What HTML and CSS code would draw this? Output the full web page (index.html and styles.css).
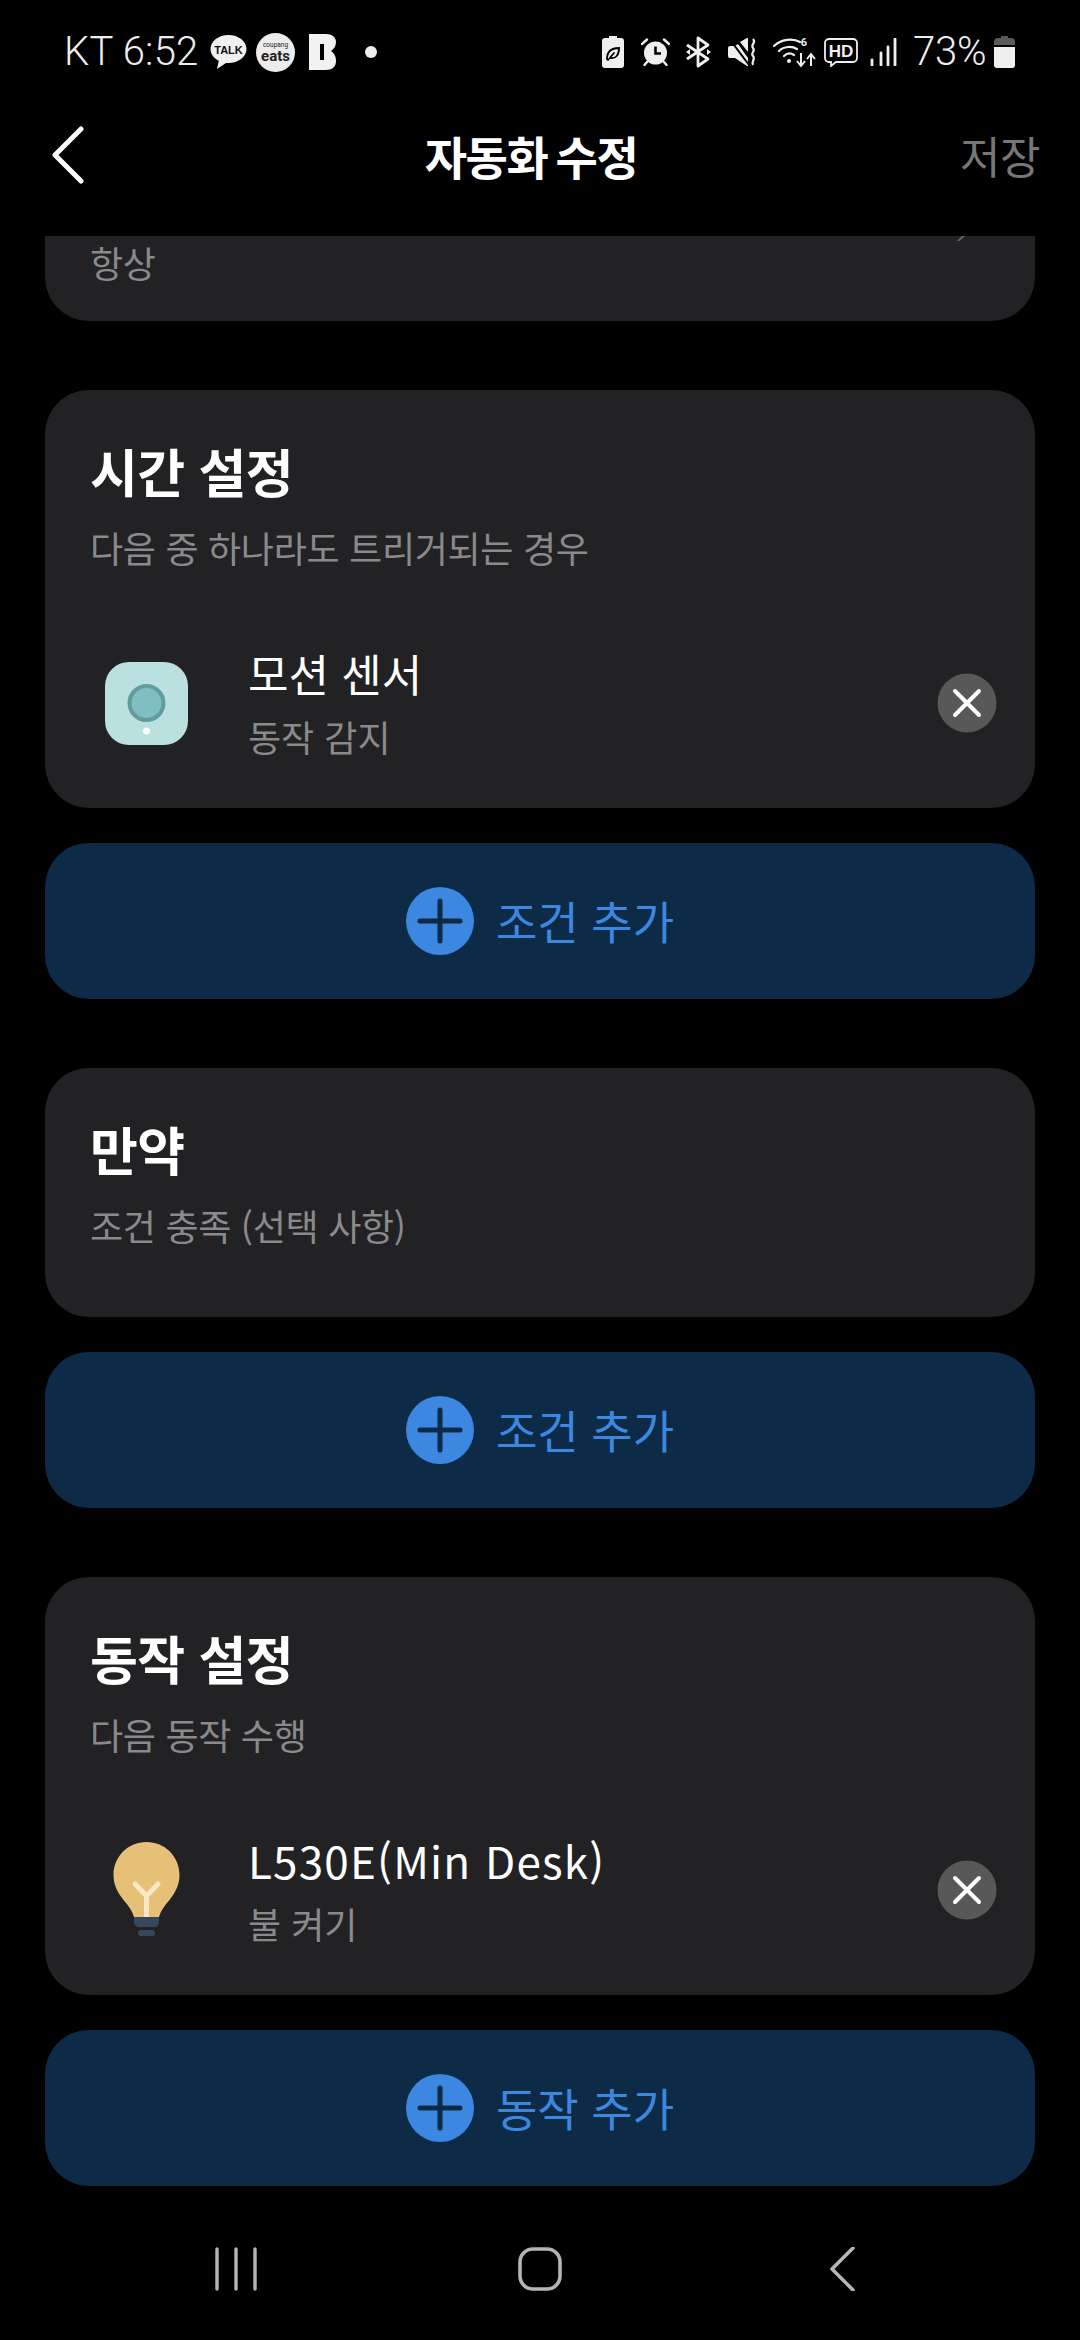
FILE: index.html
```html
<!DOCTYPE html>
<html lang="ko">
<head>
<meta charset="utf-8">
<title>자동화 수정</title>
<link rel="stylesheet" href="styles.css">
</head>
<body>
<div class="app">
  <div class="status">
    <span class="clock">KT 6:52</span>
    <svg class="si s-talk" viewBox="0 0 37 36"><path d="M18.500 1C8.500 1 .5 7.300.5 15c0 5 3.300 9.300 8.300 11.700L7 35l9-6.100c.8.100 1.700.1 2.500.1 10 0 18-6.300 18-14S28.500 1 18.500 1z" fill="#f0f0f0"/><text x="18.500" y="20" text-anchor="middle" class="talk-t">TALK</text></svg>
    <svg class="si s-eats" viewBox="0 0 39 39"><circle cx="19.500" cy="19.500" r="19.500" fill="#ececec"/><text x="19.500" y="14" text-anchor="middle" class="eats-s">coupang</text><text x="19.500" y="28" text-anchor="middle" class="eats-t">eats</text></svg>
    <svg class="si s-b" viewBox="0 0 27 36"><path d="M0 0h17c6 0 10 3 10 8 0 4-2 7-5 9 3 2 5 5 5 10 0 6-4 9-10 9H0z" fill="#f2f2f2"/><rect x="11" y="10" width="4" height="16" fill="#000"/></svg>
    <span class="dot"></span>
    <span class="status-space"></span>
    <svg class="si s-leaf" viewBox="0 0 22 32"><path d="M7 0h8v2h4a3 3 0 0 1 3 3v24a3 3 0 0 1-3 3H3a3 3 0 0 1-3-3V5a3 3 0 0 1 3-3h4z" fill="#efefef"/><path d="M5 23c0-7 4-11 12-11 0 7-3 11-9 10M6 24l6-7" fill="none" stroke="#000" stroke-width="1.800" stroke-linecap="round"/></svg>
    <svg class="si s-alarm" viewBox="0 0 29 28"><circle cx="14.500" cy="15" r="11.500" fill="#efefef"/><path d="M14.500 8.500V15.500H20" fill="none" stroke="#000" stroke-width="2.600"/><path d="M1 6l5-4.500M28 6l-5-4.500M6 24l-2.500 3M23 24l2.500 3" stroke="#efefef" stroke-width="2.400" stroke-linecap="round"/></svg>
    <svg class="si s-bt" viewBox="0 0 27 32"><path d="M2 9l21 14-10 7V2l10 7L2 23" fill="none" stroke="#efefef" stroke-width="2.800" stroke-linejoin="round"/><path d="M1 16l4-3v6zM26 16l-4-3v6z" fill="#efefef"/></svg>
    <svg class="si s-mute" viewBox="0 0 30 28"><path d="M2 8h5l3-2 10 14v8l-1 0L7 20H2a2 2 0 0 1-2-2v-8a2 2 0 0 1 2-2zM12 4l7-4h1v14z" fill="#efefef"/><path d="M3 3l18 24" stroke="#000" stroke-width="2"/><path d="M25 1c4 4-3 5 0 9 3 3-3 5 0 8 3 3-2 5 0 9" fill="none" stroke="#efefef" stroke-width="2.200"/></svg>
    <svg class="si s-wifi" viewBox="0 0 43 32"><path d="M1 10C8 3 20 2 27 6M6 15c5-5 13-5 18-2M11 20c3-3 7-3 10-1" fill="none" stroke="#efefef" stroke-width="2.200" stroke-linecap="round"/><circle cx="16" cy="25" r="2" fill="#efefef"/><text x="31" y="10" text-anchor="middle" class="wifi-t">6</text><path d="M28 17v12M24 25l4 5 4-5M38 30V19M34 23l4-5 4 5" fill="none" stroke="#efefef" stroke-width="2"/></svg>
    <svg class="si s-hd" viewBox="0 0 34 29"><path d="M5 1h24a4 4 0 0 1 4 4v15a4 4 0 0 1-4 4H12l-5 4v-4H5a4 4 0 0 1-4-4V5a4 4 0 0 1 4-4z" fill="none" stroke="#efefef" stroke-width="1.800"/><text x="17" y="18.500" text-anchor="middle" class="hd-t">HD</text></svg>
    <svg class="si s-signal" viewBox="0 0 27 28"><path d="M2 22v5M11 15v12M18 9v18M25 1v26" stroke="#efefef" stroke-width="2.800" stroke-linecap="round"/></svg>
    <span class="pct">73%</span>
    <svg class="si s-batt" viewBox="0 0 21 32"><path d="M7 0h7v2h3a4 4 0 0 1 4 4v3H0V6a4 4 0 0 1 4-4h3z" fill="#5a5a5a"/><path d="M0 11h21v18a3 3 0 0 1-3 3H3a3 3 0 0 1-3-3z" fill="#efefef"/></svg>
  </div>

  <header class="topbar">
    <svg class="back" viewBox="0 0 32 58"><path d="M29 3L3 29l26 26" fill="none" stroke="#fff" stroke-width="5" stroke-linecap="round" stroke-linejoin="round"/></svg>
    <h1 class="title">자동화 수정</h1>
    <span class="save">저장</span>
  </header>

  <main class="scroll">
    <section class="card card--clipped">
      <svg class="peek" viewBox="0 0 10 6"><path d="M0 6L6 0h4L3 6z" fill="#666"/></svg>
      <p class="sub">항상</p>
    </section>

    <section class="group">
      <div class="card card--row">
        <div class="head">
          <h2 class="h">시간 설정</h2>
          <p class="sub">다음 중 하나라도 트리거되는 경우</p>
        </div>
        <div class="row">
          <svg class="device" viewBox="0 0 83 83"><rect width="83" height="83" rx="24" fill="#bae0df"/><circle cx="41.500" cy="41" r="17" fill="#7fbfc1" stroke="#629c9d" stroke-width="4"/><circle cx="41.500" cy="69" r="3.500" fill="#fff"/></svg>
          <div class="row-text">
            <div class="name">모션 센서</div>
            <div class="desc">동작 감지</div>
          </div>
          <svg class="remove" viewBox="0 0 60 60"><circle cx="30" cy="30" r="29.500" fill="#585858"/><path d="M18 18l24 24M42 18L18 42" stroke="#fff" stroke-width="4" stroke-linecap="round"/></svg>
        </div>
      </div>
      <button class="add">
        <svg class="plus" viewBox="0 0 68 68"><circle cx="34" cy="34" r="34" fill="#3c87e0"/><path d="M14 34h40M34 14v40" stroke="#0d2a47" stroke-width="5" stroke-linecap="round"/></svg>
        <span>조건 추가</span>
      </button>
    </section>

    <section class="group">
      <div class="card card--empty">
        <div class="head">
          <h2 class="h">만약</h2>
          <p class="sub">조건 충족 (선택 사항)</p>
        </div>
      </div>
      <button class="add">
        <svg class="plus" viewBox="0 0 68 68"><circle cx="34" cy="34" r="34" fill="#3c87e0"/><path d="M14 34h40M34 14v40" stroke="#0d2a47" stroke-width="5" stroke-linecap="round"/></svg>
        <span>조건 추가</span>
      </button>
    </section>

    <section class="group">
      <div class="card card--row">
        <div class="head">
          <h2 class="h">동작 설정</h2>
          <p class="sub">다음 동작 수행</p>
        </div>
        <div class="row">
          <svg class="device device--bulb" viewBox="0 0 83 96"><path d="M41.500 0C23 0 8.500 14.500 8.500 33c0 10 4 17 10 25 5 6 9 11 10.500 17h25c1.500-6 5.500-11 10.500-17 6-8 10-15 10-25C74.500 14.500 60 0 41.500 0z" fill="#e7c077"/><path d="M30 42l11.500 12L53 42M41.500 54v21" fill="none" stroke="#f8e8c6" stroke-width="5" stroke-linecap="round"/><path d="M29 75h25v4c0 4-2 6-6 6H35c-4 0-6-2-6-6z" fill="#36475e"/><rect x="33" y="88" width="17" height="6" rx="3" fill="#36475e"/></svg>
          <div class="row-text">
            <div class="name name--latin">L530E(Min Desk)</div>
            <div class="desc">불 켜기</div>
          </div>
          <svg class="remove" viewBox="0 0 60 60"><circle cx="30" cy="30" r="29.500" fill="#585858"/><path d="M18 18l24 24M42 18L18 42" stroke="#fff" stroke-width="4" stroke-linecap="round"/></svg>
        </div>
      </div>
      <button class="add">
        <svg class="plus" viewBox="0 0 68 68"><circle cx="34" cy="34" r="34" fill="#3c87e0"/><path d="M14 34h40M34 14v40" stroke="#0d2a47" stroke-width="5" stroke-linecap="round"/></svg>
        <span>동작 추가</span>
      </button>
    </section>
  </main>

  <nav class="nav">
    <svg class="nav-i" viewBox="0 0 44 44"><path d="M2 2v40M21 2v40M40 2v40" stroke="#b5b5b5" stroke-width="3.400" stroke-linecap="round"/></svg>
    <svg class="nav-i" viewBox="0 0 44 44"><rect x="2" y="2" width="40" height="40" rx="13" fill="none" stroke="#b5b5b5" stroke-width="3.600"/></svg>
    <svg class="nav-i" viewBox="0 0 44 44"><path d="M32 1L11 22l21 21" fill="none" stroke="#b5b5b5" stroke-width="3.600" stroke-linecap="round" stroke-linejoin="round"/></svg>
  </nav>
</div>
</body>
</html>
```
FILE: styles.css
```css
* { box-sizing: border-box; }
html, body { margin: 0; padding: 0; background: #000; }
body { font-family: "Noto Sans CJK KR", "Noto Sans", sans-serif; color: #fff; }
.app { width: 1080px; height: 2340px; display: flex; flex-direction: column; overflow: hidden; background: #000; }

.status { height: 104px; padding: 0 65px 0 64px; display: flex; align-items: center; flex: none; color: #eee; }
.clock, .pct { font-family: Roboto, sans-serif; font-weight: 300; font-size: 40px; line-height: 1; }
.clock { width: 146px; letter-spacing: .2px; }
.si { display: block; flex: none; }
.s-talk { width: 37px; height: 36px; }
.s-eats { width: 39px; height: 39px; margin-left: 9px; }
.s-b { width: 27px; height: 36px; margin-left: 14px; }
.dot { width: 12px; height: 12px; border-radius: 50%; background: #eee; margin-left: 29px; }
.status-space { flex: 1; }
.s-leaf { width: 22px; height: 32px; }
.s-alarm { width: 29px; height: 28px; margin-left: 17px; }
.s-bt { width: 27px; height: 32px; margin-left: 15px; }
.s-mute { width: 30px; height: 28px; margin-left: 16px; }
.s-wifi { width: 43px; height: 32px; margin-left: 15px; }
.s-hd { width: 34px; height: 29px; margin-left: 8px; }
.s-signal { width: 27px; height: 28px; margin-left: 12px; }
.pct { margin-left: 16px; width: 73px; letter-spacing: -.2px; }
.s-batt { width: 21px; height: 32px; margin-left: 8px; }
.talk-t { font: 700 11px "Liberation Sans", sans-serif; fill: #111; }
.eats-s { font: 400 6.500px Roboto, sans-serif; fill: #222; }
.eats-t { font: 700 15px Roboto, sans-serif; fill: #222; }
.wifi-t { font: 700 11px Roboto, sans-serif; fill: #efefef; }
.hd-t { font: 700 17px "Liberation Sans", sans-serif; fill: #efefef; }

.topbar { height: 132px; flex: none; display: flex; align-items: center; padding: 0 40px 30px 52px; }
.back { width: 32px; height: 58px; flex: none; }
.title { flex: 1; margin: 0; text-align: center; font-size: 46px; font-weight: 700; letter-spacing: -1.500px; word-spacing: -3px; line-height: 60px; padding-left: 26px; }
.save { font-size: 44px; color: #777; line-height: 60px; width: 88px; text-align: right; letter-spacing: -.5px; }

.scroll { flex: 1; min-height: 0; overflow: hidden; display: flex; flex-direction: column; gap: 69px; }
.card { background: #222224; margin: 0 45px; border-radius: 44px; }
.card--clipped { position: relative; height: 300px; margin-top: -215px; padding-top: 216px; flex: none; padding-left: 45px; }
.peek { position: absolute; left: 912px; top: 215px; width: 8px; height: 5px; }
.group { display: flex; flex-direction: column; gap: 35px; flex: none; }
.head { padding: 44px 45px 64px; }
.h { margin: 0; font-size: 52px; line-height: 74px; font-weight: 700; letter-spacing: -.6px; }
.sub { margin: 14px 0 0; font-size: 36px; line-height: 50px; color: #8a8a8c; letter-spacing: -.3px; }
.card--clipped .sub { margin: 0; }
.card--row { padding-bottom: 40px; }
.card--empty { padding-bottom: 3px; }
.row { display: flex; align-items: center; height: 130px; margin-top: 2px; padding: 0 38px 0 60px; }
.device { width: 83px; height: 83px; flex: none; }
.device--bulb { height: 96px; }
.row-text { flex: 1; margin-left: 60px; min-width: 0; }
.name { font-size: 44px; line-height: 60px; color: #fff; margin-top: -2px; }
.name--latin { letter-spacing: 1.2px; }
.desc { font-size: 36px; line-height: 50px; margin-top: 8px; color: #8a8a8c; }
.remove { width: 60px; height: 60px; flex: none; }

.add { margin: 0 45px; height: 156px; border: 0; border-radius: 44px; background: #0d2a47; display: flex; align-items: center; justify-content: center; gap: 22px; color: #3c87e0; font: 400 45px/60px "Noto Sans CJK KR", sans-serif; padding: 0; }
.plus { width: 68px; height: 68px; flex: none; }

.nav { height: 153px; flex: none; display: grid; grid-template-columns: repeat(3, 303px); justify-content: center; justify-items: center; padding-top: 60px; }
.nav-i { width: 44px; height: 44px; }
```
